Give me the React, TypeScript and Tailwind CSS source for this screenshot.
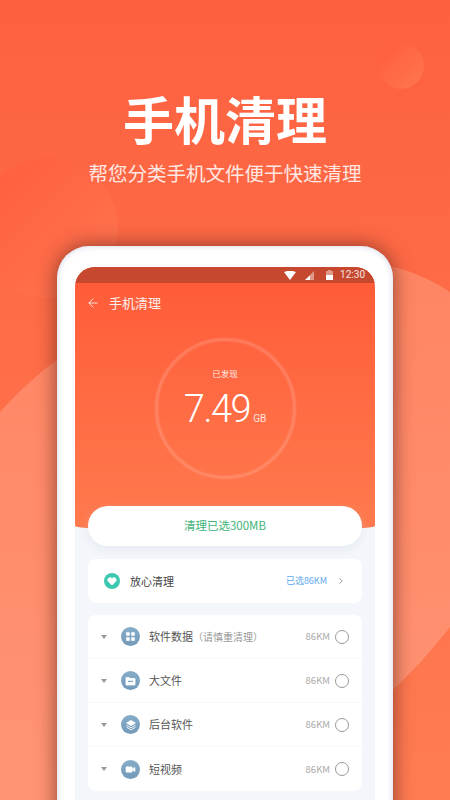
import { ArrowLeft, ChevronRight, Heart, LayoutGrid, Video } from 'lucide-react';

function FolderIcon() {
  return (
    <svg width="11" height="10" viewBox="0 0 11 10">
      <path d="M1 1.5 H4.2 L5.2 2.5 H10 V9 H1 Z" fill="#fff" stroke="#fff" strokeWidth="0.8" strokeLinejoin="round" />
      <rect x="3" y="4.8" width="5" height="1.2" fill="#7ba2c0" />
    </svg>
  );
}

function LayersIcon() {
  return (
    <svg width="12" height="12" viewBox="0 0 12 12">
      <path d="M6 1 L11 4 L6 7 L1 4 Z" fill="#fff" />
      <path d="M1.5 6.2 L6 8.8 L10.5 6.2" fill="none" stroke="#fff" strokeWidth="0.9" />
      <path d="M1.5 8.2 L6 10.8 L10.5 8.2" fill="none" stroke="#fff" strokeWidth="0.9" />
    </svg>
  );
}

const rows = [
  { name: '软件数据', note: '（请慎重清理）', icon: <LayoutGrid size={11} fill="#fff" stroke="#fff" strokeWidth={1} /> },
  { name: '大文件', note: '', icon: <FolderIcon /> },
  { name: '后台软件', note: '', icon: <LayersIcon /> },
  { name: '短视频', note: '', icon: <Video size={11} fill="#fff" stroke="#fff" strokeWidth={1} /> },
];

function Backdrop() {
  return (
    <svg className="absolute inset-0" width="450" height="800" viewBox="0 0 450 800">
      <defs>
        <linearGradient id="ball" x1="0" y1="0" x2="1" y2="1">
          <stop offset="0.2" stopColor="#ff6141" />
          <stop offset="1" stopColor="#ff7650" />
        </linearGradient>
        <linearGradient id="wave" x1="0" y1="0" x2="0" y2="1">
          <stop offset="0" stopColor="#ff8563" />
          <stop offset="1" stopColor="#ff9575" />
        </linearGradient>
      </defs>
      <circle cx="401" cy="66" r="23" fill="url(#ball)" />
      <circle cx="48" cy="228" r="70" fill="url(#ball)" />
      <path d="M0 412 C20 390 40 372 57 360 C150 300 300 245 393 267 C415 272 435 282 450 292 V627 C432 650 412 672 393 690 C300 780 200 820 0 830 Z" fill="url(#wave)" />
    </svg>
  );
}

export default function App() {
  return (
    <div
      className="relative w-[450px] h-[800px] overflow-hidden bg-gradient-to-b from-[#fd6040] to-[#ff7c52] text-white"
      style={{ fontFamily: '"Noto Sans CJK SC", sans-serif' }}
    >
      <Backdrop />
      <div className="relative flex flex-col items-center">
        <h1 className="mt-[82px] text-[51px] leading-[72px] font-bold">手机清理</h1>
        <p className="mt-[4px] text-[19.5px] leading-[30px] text-white/85">帮您分类手机文件便于快速清理</p>

        {/* phone frame */}
        <div className="mt-[58px] w-[336px] h-[600px] rounded-[32px] bg-white px-[18px] pt-[21px] shadow-[0_0_20px_rgba(100,40,30,0.75),inset_0_0_6px_rgba(180,185,215,0.6)]">
          <div className="relative h-full rounded-t-[20px] overflow-hidden bg-[#f3f6fa]">
            <div className="absolute top-0 inset-x-0 h-[264px] rounded-b-[150px_5px] bg-gradient-to-b from-[#ff5a38] to-[#ff7a4e]" />

            <div className="relative">
              {/* status bar */}
              <div className="h-4 bg-[#c5482f] flex items-center justify-end pr-[10px] text-[10px] text-white/85" style={{ fontFamily: 'Roboto, sans-serif' }}>
                <svg width="12" height="9" viewBox="0 0 12 9" className="mr-[9px]">
                  <path d="M0 1 Q6 -1.5 12 1 L6 9 Z" fill="#fff" />
                </svg>
                <svg width="10" height="9" viewBox="0 0 10 9" className="mr-[11px]">
                  <path d="M9 0 V9 H0 Z" fill="#fff" fillOpacity="0.45" />
                  <path d="M5 4.5 V9 H0 Z" fill="#fff" />
                </svg>
                <svg width="7" height="10" viewBox="0 0 7 10" className="mr-[7px]">
                  <path d="M2 0 H5 V1 H7 V10 H0 V1 H2 Z" fill="#fff" fillOpacity="0.45" />
                  <path d="M0 5 H7 V10 H0 Z" fill="#fff" />
                </svg>
                <span className="leading-none">12:30</span>
              </div>

              {/* app bar */}
              <div className="h-10 flex items-center pl-[11px] text-[13px] text-white/90">
                <ArrowLeft size={14} strokeWidth={1.5} />
                <span className="ml-[9px]">手机清理</span>
              </div>

              {/* ring */}
              <div className="mt-[15px] mx-auto w-[141px] h-[141px] rounded-full border-[3px] border-white/15 shadow-[inset_0_0_0_1px_rgba(255,255,255,0.06),0_0_0_1px_rgba(255,255,255,0.05)] flex flex-col items-center">
                <span className="mt-[26px] text-[8.5px] leading-3 text-white/85">已发现</span>
                <div className="mt-[8px] flex items-baseline">
                  <span className="text-[38px] leading-[44px] tracking-[-1.5px]" style={{ fontFamily: 'Roboto, sans-serif', fontWeight: 300 }}>7.49</span>
                  <span className="ml-[3px] text-[10px] text-white/80" style={{ fontFamily: 'Roboto, sans-serif' }}>GB</span>
                </div>
              </div>

              {/* selected pill */}
              <div className="mt-[27px] mx-[13px] h-10 rounded-[20px] bg-white shadow-[0_3px_8px_rgba(200,210,225,0.3)] flex items-center justify-center text-[11.5px] text-[#3eb47a]">
                清理已选300MB
              </div>

              {/* safe clean */}
              <div className="mt-[13px] mx-[13px] h-11 rounded-[8px] bg-white flex items-center pl-4 pr-[16px]">
                <div className="w-4 h-4 rounded-full bg-[#3cc8b0] flex items-center justify-center">
                  <Heart size={10} fill="#fff" stroke="#fff" />
                </div>
                <span className="ml-[10px] text-[11px] text-[#444]">放心清理</span>
                <span className="ml-auto text-[9px] text-[#5aa9ee]">已选86KM</span>
                <ChevronRight size={10} className="ml-[9px] text-[#888]" />
              </div>

              {/* list */}
              <div className="mt-3 mx-[13px] rounded-[8px] bg-white">
                {rows.map((row, idx) => (
                  <div key={row.name} className={`h-11 flex items-center pl-[13px] pr-[13px] ${idx < 3 ? 'border-b border-[#f6f7f9]' : ''}`}>
                    <span className="w-0 h-0 border-x-[3px] border-x-transparent border-t-[4px] border-t-[#999]" />
                    <div className="ml-[14px] w-[19px] h-[19px] rounded-full bg-gradient-to-b from-[#86acc9] to-[#7299b8] flex items-center justify-center">
                      {row.icon}
                    </div>
                    <span className="ml-[9px] text-[11px] text-[#555]">{row.name}</span>
                    {row.note && <span className="text-[10px] text-[#999]">{row.note}</span>}
                    <span className="ml-auto text-[9.5px] text-[#aaa]">86KM</span>
                    <span className="ml-[5px] w-[14px] h-[14px] rounded-full border border-[#999]" />
                  </div>
                ))}
              </div>
            </div>
          </div>
        </div>
      </div>
    </div>
  );
}
